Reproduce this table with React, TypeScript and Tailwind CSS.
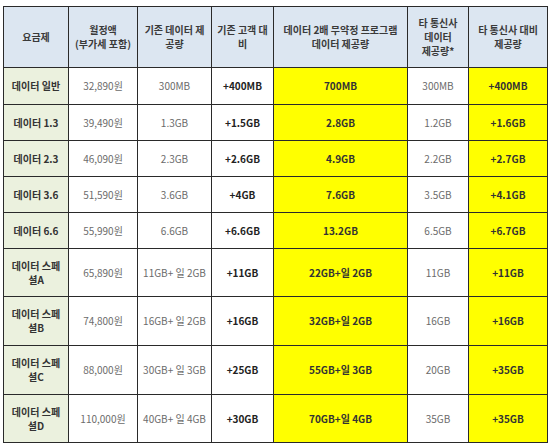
import React from "react";

type Cell = { t: React.ReactNode; kind: "name" | "gray" | "bold" | "ybold" };

const rows: string[][] = [
  ["데이터 일반", "32,890원", "300MB", "+400MB", "700MB", "300MB", "+400MB"],
  ["데이터 1.3", "39,490원", "1.3GB", "+1.5GB", "2.8GB", "1.2GB", "+1.6GB"],
  ["데이터 2.3", "46,090원", "2.3GB", "+2.6GB", "4.9GB", "2.2GB", "+2.7GB"],
  ["데이터 3.6", "51,590원", "3.6GB", "+4GB", "7.6GB", "3.5GB", "+4.1GB"],
  ["데이터 6.6", "55,990원", "6.6GB", "+6.6GB", "13.2GB", "6.5GB", "+6.7GB"],
  ["데이터 스페|셜A", "65,890원", "11GB+ 일 2GB", "+11GB", "22GB+일 2GB", "11GB", "+11GB"],
  ["데이터 스페|셜B", "74,800원", "16GB+ 일 2GB", "+16GB", "32GB+일 2GB", "16GB", "+16GB"],
  ["데이터 스페|셜C", "88,000원", "30GB+ 일 3GB", "+25GB", "55GB+일 3GB", "20GB", "+35GB"],
  ["데이터 스페|셜D", "110,000원", "40GB+ 일 4GB", "+30GB", "70GB+일 4GB", "35GB", "+35GB"],
];

const headers = [
  "요금제",
  "월정액|(부가세 포함)",
  "기존 데이터 제|공량",
  "기존 고객 대|비",
  "데이터 2배 무약정 프로그램|데이터 제공량",
  "타 통신사|데이터|제공량*",
  "타 통신사 대비|제공량",
];

function lines(s: string) {
  const parts = s.split("|");
  return parts.map((p, i) => (
    <React.Fragment key={i}>
      {p}
      {i < parts.length - 1 && <br />}
    </React.Fragment>
  ));
}

const cellBase =
  "flex items-center justify-center text-center leading-[14px]";

export default function App() {
  return (
    <div
      className="w-[550px] h-[444px] bg-white pt-[6px] pl-[3px]"
      style={{ fontFamily: '"Noto Sans CJK KR", "Noto Sans", sans-serif' }}
    >
      <div className="grid w-[545px] grid-cols-[64px_68px_73px_61px_133px_60px_78px] grid-rows-[60px_36px_35px_35px_35px_35px_47px_48px_48px_47px] gap-px bg-[#2a2a2a] p-px text-[10px]">
        {headers.map((h, i) => (
          <div
            key={"h" + i}
            className={`${cellBase} bg-[#dce6f1] font-bold text-[#3a3a3a]`}
          >
            <span>{lines(h)}</span>
          </div>
        ))}
        {rows.map((r, ri) => (
          <React.Fragment key={ri}>
            <div className={`${cellBase} bg-[#ebf1de] font-bold text-[#333]`}>
              <span>{lines(r[0])}</span>
            </div>
            <div className={`${cellBase} bg-white text-[#6b6b6b]`}>{r[1]}</div>
            <div className={`${cellBase} bg-white text-[#6b6b6b]`}>{r[2]}</div>
            <div className={`${cellBase} bg-white font-bold text-[#222]`}>{r[3]}</div>
            <div className={`${cellBase} bg-[#ffff00] font-bold text-[#333]`}>{r[4]}</div>
            <div className={`${cellBase} bg-white text-[#6b6b6b]`}>{r[5]}</div>
            <div className={`${cellBase} bg-[#ffff00] font-bold text-[#333]`}>{r[6]}</div>
          </React.Fragment>
        ))}
      </div>
    </div>
  );
}
